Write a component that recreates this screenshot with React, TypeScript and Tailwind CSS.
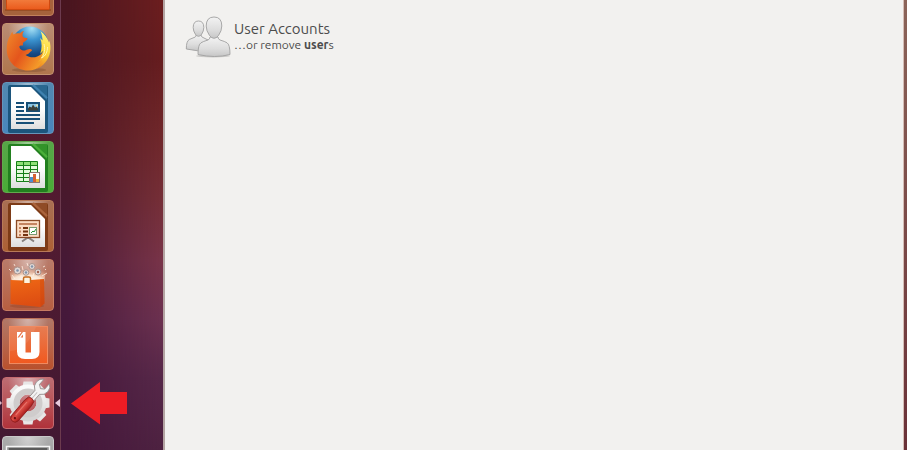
import type { ReactNode } from 'react';
import { clsx } from 'clsx';

function FilesIcon() {
  return (
    <svg viewBox="0 0 52 52" className="size-full">
      <defs>
        <linearGradient id="files" x1="0" y1="0" x2="0" y2="1">
          <stop offset="0.6" stopColor="#f58a4a" />
          <stop offset="1" stopColor="#ea5a1c" />
        </linearGradient>
      </defs>
      <rect x="3" y="45" width="46" height="2" fill="#8a3a10" opacity="0.5" />
      <rect x="4.5" y="10" width="43" height="35.5" rx="1" fill="url(#files)" stroke="#d0490f" />
    </svg>
  );
}

function FirefoxIcon() {
  return (
    <svg viewBox="0 0 52 52" className="size-full">
      <defs>
        <radialGradient id="globe" cx="0.55" cy="0.05" r="0.9">
          <stop offset="0" stopColor="#a8e2f5" />
          <stop offset="0.35" stopColor="#3b93cf" />
          <stop offset="0.75" stopColor="#164a86" />
          <stop offset="1" stopColor="#10335f" />
        </radialGradient>
        <linearGradient id="fox" x1="0" y1="0" x2="1" y2="0.6">
          <stop offset="0" stopColor="#f08a2a" />
          <stop offset="0.5" stopColor="#e4551c" />
          <stop offset="1" stopColor="#f6a22a" />
        </linearGradient>
        <linearGradient id="tail" x1="0.5" y1="0" x2="0.3" y2="1">
          <stop offset="0" stopColor="#fff27a" />
          <stop offset="0.55" stopColor="#fbd233" />
          <stop offset="1" stopColor="#ee7f20" />
        </linearGradient>
      </defs>
      <ellipse cx="27" cy="47" rx="17" ry="2" fill="#6b3a20" opacity="0.3" />
      <circle cx="28" cy="22" r="18.5" fill="url(#globe)" />
      <path
        d="M8.5 12C9 10.500 9.500 9.500 10.500 9c.1 1 .4 2 1 2.600 2-1.300 4.500-1.400 6.500-1.200C19 9 20.300 8.300 22 8c-1.300 1.800-1.800 3.500-1.300 5.500 1 1.500 3.300 1.500 4.800 1.800.2 1.800-2.500 2.900-4 4-.8 1-.5 2-.6 3.200-2-.3-3.200 0-3.600 1.300C18 27 20.500 28 23 27.400c2-.5 4-2.400 6.500-1 .8.600.3 1.600-.5 1.900-1.600 1.400-2.500 3.200-5.500 3.700 5 3.500 11.500 3 15.500-.8 3.300-3.200 4.500-7.200 3.600-11.700 2 2.500 3.200 6 3 9.700-1 10.500-9.500 18.300-19.500 18.300C14 47.500 5 38.500 4.700 27c-.2-5.500 1-11 3.800-15z"
        fill="url(#fox)"
      />
      <path
        d="M38.500 8c4 3 7 7 8.500 11.500l.3-2c1.300 3.500 1.500 8 .8 11.500-1.500 8-7 14.500-14 17 3.500-3 5.200-5.600 6-9-1.500 1.300-3 1.900-4.600 2.200 3-3 5-6.500 5.400-11.500-.9 1.500-1.600 2.200-2.700 3C40 25.500 40.300 20 38 15l2.600 2.500C40.300 14 39.800 11 38.500 8z"
        fill="url(#tail)"
      />
      <path d="M42 21c1.500 5 .5 10-2.500 14 4-2 6-6 6-11" fill="none" stroke="#fff6b0" />
    </svg>
  );
}

type SheetProps = { dark: string; light: string; children: ReactNode };

// Shared LibreOffice page with the cut corner
function Sheet({ dark, light, children }: SheetProps) {
  return (
    <svg viewBox="0 0 52 52" className="size-full">
      <defs>
        <linearGradient id="sheet" x1="0" y1="0" x2="0" y2="1">
          <stop offset="0.5" stopColor="#ffffff" />
          <stop offset="1" stopColor="#dedede" />
        </linearGradient>
      </defs>
      <path d="M6 5q0-2 2-2h36q2 0 2 2v44q0 2-2 2H8q-2 0-2-2z" fill={dark} />
      <path d="M7 3h22l16 15V4q0-1-1-1z" fill={light} opacity="0.6" />
      <path d="M34 3h9q2 0 2 2v8q-1 1-2.500-.5L34 4z" fill={dark} opacity="0.35" />
      <path d="M31 3l14 13" stroke={light} strokeWidth="2" />
      <path d="M9 5h20l14 14v28H9z" fill="url(#sheet)" />
      {children}
    </svg>
  );
}

function WriterIcon() {
  return (
    <Sheet dark="#1c557c" light="#3f82b0">
      <path d="M14 21h8M14 25h8M14 29h8M14 33h24M14 37h24M14 41h18" stroke="#174f77" strokeWidth="2" />
      <rect x="25" y="21" width="12" height="8" fill="#8cc7e6" stroke="#174f77" strokeWidth="2" />
      <path d="M26 28.500v-2l1.500-2 2 1 1.500-3 2 3 1.500-1 1.500 2v2z" fill="#3c3f38" />
      <circle cx="35" cy="23.500" r="1" fill="#f2e39b" />
    </Sheet>
  );
}

function CalcIcon() {
  return (
    <Sheet dark="#22801f" light="#4cb03a">
      <rect x="14.5" y="20.5" width="21" height="20" fill="#e4fbdc" />
      <rect x="14.5" y="20.5" width="21" height="4" fill="#8fe077" />
      <path
        d="M14.500 20.500h21v20h-21zM21.500 20.500v20M28.500 20.500v20M14.500 24.500h21M14.500 28.500h21M14.500 32.500h21M14.500 36.500h21"
        fill="none"
        stroke="#168018"
      />
      <rect x="27.5" y="31.5" width="10" height="10" fill="#fff" stroke="#8a7672" />
      <path d="M28 36h3v5h-3z" fill="#4d8ed0" />
      <path d="M31 33h3v8h-3z" fill="#d66035" />
      <path d="M34 38h3v3h-3z" fill="#efb83c" />
    </Sheet>
  );
}

function ImpressIcon() {
  return (
    <Sheet dark="#7d3b17" light="#ab653d">
      <path d="M20 41.500l5-3.500h2l5 3.500" fill="none" stroke="#85807d" strokeWidth="2" />
      <rect x="14.5" y="20.5" width="23" height="17" fill="#fbdcc4" stroke="#8b4a25" strokeWidth="1.3" />
      <path d="M17 24h18" stroke="#c48460" strokeWidth="2" />
      <path d="M17 28h2M17 31.500h2M17 35h2" stroke="#c48460" strokeWidth="2" />
      <path d="M21 28h5M21 31.500h5M21 35h5" stroke="#74330f" strokeWidth="2" />
      <rect x="27.5" y="27.5" width="7" height="7" fill="#fff" stroke="#7a9a70" />
      <path d="M29 33l2-2 1 1 2-3" fill="none" stroke="#259133" />
    </Sheet>
  );
}

function SoftwareIcon() {
  return (
    <svg viewBox="0 0 52 52" className="size-full">
      <defs>
        <linearGradient id="bag" x1="0" y1="0" x2="0.2" y2="1">
          <stop offset="0" stopColor="#ef6815" />
          <stop offset="1" stopColor="#dd4d12" />
        </linearGradient>
        <radialGradient id="glow" cx="0.5" cy="0.95" r="0.75">
          <stop offset="0" stopColor="#fff" />
          <stop offset="0.5" stopColor="#ffeedb" stopOpacity="0.9" />
          <stop offset="1" stopColor="#ffc39a" stopOpacity="0" />
        </radialGradient>
      </defs>
      <ellipse cx="25" cy="47" rx="17" ry="2" fill="#7a3012" opacity="0.25" />
      <path d="M6 7h39l-3 16H10z" fill="url(#glow)" />
      <g fill="#e2d9d6" stroke="#a8948e">
        <circle cx="15.500" cy="11.500" r="3.500" />
        <circle cx="24" cy="13.500" r="2.800" />
        <circle cx="30" cy="7.500" r="3" />
        <circle cx="36" cy="13" r="3" />
      </g>
      <g fill="#7f93aa">
        <circle cx="15.500" cy="11.500" r="1.300" />
        <circle cx="24" cy="13.500" r="1.200" />
        <circle cx="30" cy="7.500" r="1.200" />
      </g>
      <circle cx="36" cy="13" r="1.200" fill="#a55e4c" />
      <path
        d="M10 16l3 4M12 5l1 2M20 7l1 4M41 8l2-1M40 17l5-3M43 11l1-1M32 14l-1 3M19 16v3M9 12l-2-2M26 7l-1-3"
        stroke="#fff2e6"
        opacity="0.8"
      />
      <path d="M8.500 21l13 .5v2.500h7v-3l13.500-1 .5 24.500-4 3.500-30-3z" fill="url(#bag)" />
      <path d="M38 20.500l.5 27.500 4-3.500-.5-24.500z" fill="#b9400f" opacity="0.3" />
      <path d="M21.500 24v-4.500q0-1.500 1.500-1.500h4q1.500 0 1.500 1.500V24" fill="#fff3df" stroke="#c56a1c" strokeWidth="1.500" />
    </svg>
  );
}

function UbuntuOneIcon() {
  return (
    <svg viewBox="0 0 52 52" className="size-full">
      <defs>
        <linearGradient id="one" x1="0" y1="0" x2="0" y2="1">
          <stop offset="0" stopColor="#e67c52" />
          <stop offset="1" stopColor="#f1591f" />
        </linearGradient>
      </defs>
      <rect x="7.5" y="8.5" width="38" height="37" fill="url(#one)" stroke="#f08a60" />
      <path d="M8 33Q25 32 34 9H8z" fill="#fff" opacity="0.08" />
      <path d="M15 14h8.500v20.500H29V14h8.500v20q0 7-7.500 7h-7q-8 0-8-7.500z" fill="#fff" />
      <path d="M17 19.500l4-5.500h-1.500L15.500 19.500zM18.500 19.500h2.500v-3z" fill="#e9744a" />
    </svg>
  );
}

const TEETH = [0, 45, 90, 135, 180, 225, 270, 315];

function SettingsIcon() {
  return (
    <svg viewBox="0 0 52 52" className="size-full">
      <defs>
        <linearGradient id="gear" x1="0" y1="0" x2="0" y2="1">
          <stop offset="0" stopColor="#fafafa" />
          <stop offset="1" stopColor="#d6d4d4" />
        </linearGradient>
        <linearGradient id="handle" x1="0" y1="0" x2="1" y2="0">
          <stop offset="0" stopColor="#b82a28" />
          <stop offset="0.4" stopColor="#dd4f47" />
          <stop offset="1" stopColor="#a81c1c" />
        </linearGradient>
      </defs>
      <g fill="#e8e6e6">
        {TEETH.map((angle) => (
          <path key={angle} d="M20.500 10l1-5.500h9l1 5.500z" transform={`rotate(${angle} 26 26)`} />
        ))}
      </g>
      <circle cx="26" cy="26" r="13.5" fill="none" stroke="url(#gear)" strokeWidth="10" />
      <circle cx="26" cy="26" r="11.5" fill="none" stroke="#cfcccc" strokeWidth="6" />
      <g transform="rotate(41 26 26)">
        <path
          d="M23 24V12q-4.500-2.500-4.500-7.500 0-5 4-7v7l3.500 2.500 3.500-2.500v-7q4 2 4 7 0 5-4.500 7.500V24z"
          fill="#f3f3f3"
          stroke="#8e8686"
          strokeWidth="0.8"
        />
        <path d="M26 12v11" stroke="#c5c1c1" />
        <path
          d="M22.500 21q3.500-2 7 0l1 5-.2 20q-.5 4-4.300 4t-4.300-4l-.2-20z"
          fill="url(#handle)"
          stroke="#8c1c1c"
          strokeWidth="0.8"
        />
        <path d="M24.500 26v17" stroke="#f2948b" opacity="0.6" />
        <circle cx="26" cy="46" r="1.2" fill="#6f1111" />
      </g>
    </svg>
  );
}

function WorkspaceIcon() {
  return (
    <svg viewBox="0 0 52 52" className="size-full">
      <rect x="4.5" y="10.5" width="43" height="34" fill="#8d8d8d" stroke="#f4f4f4" strokeWidth="1.5" />
      <rect x="7" y="12" width="38" height="3" fill="#5b5b5b" />
    </svg>
  );
}

function UsersIcon() {
  return (
    <svg viewBox="0 0 46 42" className="h-[42px] w-[46px] shrink-0" aria-hidden="true">
      <defs>
        <linearGradient id="person" x1="0" y1="0" x2="0" y2="1">
          <stop offset="0" stopColor="#f3f3f3" />
          <stop offset="0.6" stopColor="#dddddd" />
          <stop offset="1" stopColor="#c6c6c6" />
        </linearGradient>
      </defs>
      <ellipse cx="28" cy="40" rx="17" ry="1.5" fill="#000" opacity="0.16" />
      <g fill="url(#person)" stroke="#a0a0a0" strokeWidth="0.9">
        <path d="M1.300 33q0-8 3-9.500l6-2.500q.8-.5.800-2.500h5q0 2 .9 2.500l6 3V34q-10 2-21.700-1z" />
        <path d="M13.500 5q5.300 0 5.300 6.500 0 3.500-2.300 7-1.500 1.800-3 1.800t-3-1.800q-2.300-3.500-2.300-7Q8.200 5 13.500 5z" />
        <path d="M13 38.500q0-10 3-11.700 2-1.300 7-2.800 2-.8 2-3h8q0 2.200 2 3 5 1.500 7 2.800 3 1.700 3 11.700-15 4-32 0z" />
        <path d="M29 1q7.800 0 7.800 9 0 4.800-3.300 9.500-2.200 2.800-4.500 2.800t-4.500-2.800q-3.300-4.700-3.300-9.500 0-9 7.800-9z" />
      </g>
    </svg>
  );
}

type LauncherItem = { name: string; tile: string; icon: ReactNode; active?: boolean };

const launcherItems: LauncherItem[] = [
  { name: 'Files', tile: 'border-[#c2805c] bg-[#a6623c]', icon: <FilesIcon /> },
  { name: 'Firefox', tile: 'border-[#c4926f] from-[#b98c74] to-[#b0764d]', icon: <FirefoxIcon /> },
  { name: 'LibreOffice Writer', tile: 'border-[#6695ba] from-[#5288b0] to-[#4986bd]', icon: <WriterIcon /> },
  { name: 'LibreOffice Calc', tile: 'border-[#62a94e] from-[#57a548] to-[#49ad36]', icon: <CalcIcon /> },
  { name: 'LibreOffice Impress', tile: 'border-[#b87a58] from-[#a86f54] to-[#ad6034]', icon: <ImpressIcon /> },
  { name: 'Software Center', tile: 'border-[#c77c62] from-[#b87b6a] to-[#b75e40]', icon: <SoftwareIcon /> },
  { name: 'Ubuntu One', tile: 'border-[#bd7158] from-[#b07868] to-[#b9502c]', icon: <UbuntuOneIcon /> },
  { name: 'System Settings', tile: 'border-[#c56b70] from-[#bd6d73] to-[#b0323b]', icon: <SettingsIcon />, active: true },
  { name: 'Workspace Switcher', tile: 'border-[#c8c8c8] from-[#adadad] to-[#8c8c8c]', icon: <WorkspaceIcon /> },
];

function Launcher() {
  return (
    <nav
      aria-label="Launcher"
      className="z-10 w-[61px] shrink-0 border-r border-[#6c3a4e] bg-linear-to-b from-[#51182a] via-[#521b31] to-[#421832]"
    >
      <ul className="-mt-9 flex flex-col gap-[7px] pl-[2px]">
        {launcherItems.map(({ name, tile, icon, active }) => (
          <li key={name} className="relative">
            <button
              type="button"
              aria-label={name}
              className={clsx('block size-[52px] overflow-hidden rounded border bg-linear-to-b', tile)}
            >
              <span className="-m-px block size-[52px] bg-[radial-gradient(ellipse_at_top,#ffffff73,transparent_55%)]">
                {icon}
              </span>
            </button>
            {active && <ActiveMarks />}
          </li>
        ))}
      </ul>
    </nav>
  );
}

function ActiveMarks() {
  return (
    <>
      <svg viewBox="0 0 2 6" className="absolute top-[23px] -left-[2px] h-[6px] w-[2px]" aria-hidden="true">
        <path d="M0 1l2 2-2 2z" fill="#d9b9c8" />
      </svg>
      <svg viewBox="0 0 5 8" className="absolute top-[22px] left-[53px] h-2 w-[5px]" aria-hidden="true">
        <path d="M5 0v8L0 4z" fill="#e6c9dc" />
      </svg>
      <svg viewBox="0 0 57 44" className="absolute top-1 left-[68px] h-11 w-[57px]" aria-hidden="true">
        <path d="M1 22.500L30 1v10h27v22H30v10.500z" fill="#ed1c24" />
      </svg>
    </>
  );
}

// Wallpaper strip: warm glow on the right, fading into the darker left side
function Wallpaper() {
  return (
    <div className="w-[102px] shrink-0 bg-[linear-gradient(to_bottom,#6c1e1f,#661d1f_13%,#70272a_29%,#762f37_44%,#793449_58%,#6c3150_71%,#572849_84%,#4e2241)]">
      <div className="h-full border-r border-black/40 bg-[linear-gradient(to_bottom,#48151f,#4a1724_29%,#471930_49%,#45193a_67%,#43163a)] [mask-image:linear-gradient(to_right,black_5%,transparent)]" />
    </div>
  );
}

export default function App() {
  return (
    <div className="flex h-screen overflow-hidden bg-[#45162c] font-['Ubuntu','Noto_Sans',sans-serif]">
      <Launcher />
      <Wallpaper />
      <main className="min-w-0 flex-1 border-l-2 border-[#b3a4a2] bg-[#f2f1ef] pt-4 pl-5">
        <a href="#user-accounts" className="flex w-fit items-start gap-[3px] text-[#4c4c4c]">
          <UsersIcon />
          <span className="flex flex-col pt-[3px]">
            <span className="text-[15px] leading-5">User Accounts</span>
            <span className="text-[12px] leading-3">
              …or remove <b>user</b>s
            </span>
          </span>
        </a>
      </main>
      <div className="w-1 shrink-0 border-l border-[#d5bdb6] bg-linear-to-b from-[#8b6459] to-[#6a3138]" />
    </div>
  );
}
